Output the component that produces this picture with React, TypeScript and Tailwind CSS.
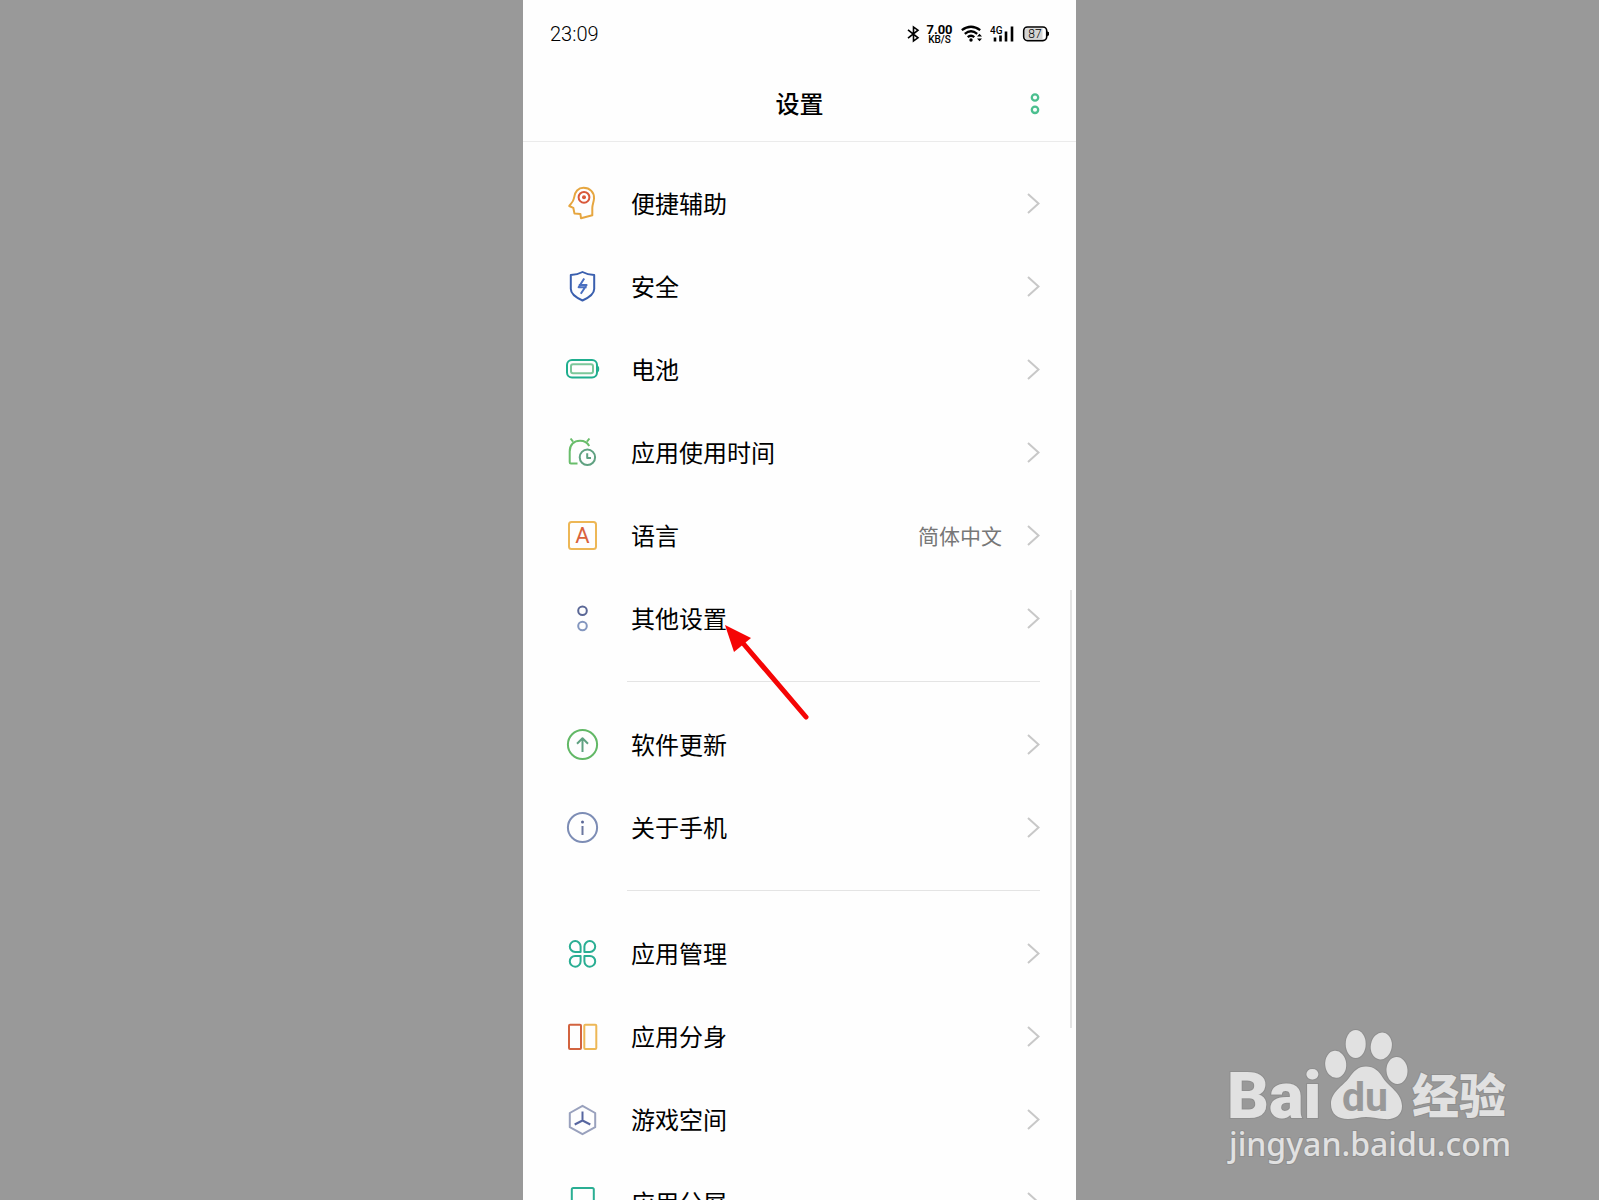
import type { ReactNode } from 'react'

type Setting = {
    label: string
    value?: string
    icon: ReactNode
    pointed?: boolean
}

const groups: Setting[][] = [
    [
        {
            label: '便捷辅助',
            icon: (
                <>
                    <path
                        stroke="#e6a640"
                        d="M12 15C12.5 8.5 16.5 4.8 21.5 4.8C28 4.8 32.4 9.5 32 15.5C31.8 19 30.3 22 30.3 25V32.3L19 35.2L18.4 31L12.5 30.6L11.3 24.8L7.2 23C9 20.5 11.6 18.5 12 15Z"
                    />
                    <circle cx="22" cy="14.3" r="5.4" stroke="#d9583a" />
                    <circle cx="22" cy="14.3" r="2" fill="#d9583a" stroke="none" />
                </>
            ),
        },
        {
            label: '安全',
            icon: (
                <>
                    <path
                        stroke="#3a5fae"
                        d="M20.5 6C17 8 13 8.8 8.8 9V23C8.8 28.5 15 32 20.5 34.5C26 32 32.2 28.5 32.2 23V9C28 8.8 24 8 20.5 6Z"
                    />
                    <path stroke="#4a6fc0" d="M22.2 12.5L16.6 21.2H24.6M18.8 27.8L24.6 19H16.8" />
                </>
            ),
        },
        {
            label: '电池',
            icon: (
                <>
                    <rect x="5" y="11" width="30" height="17.6" rx="5" stroke="#1fae8e" />
                    <rect x="9" y="15.3" width="22" height="9" rx="2" stroke="#7cc79b" />
                    <path d="M35 16.5C36.5 17 37.2 17.5 37.2 20S36.5 23 35 23.5Z" fill="#1fae8e" stroke="none" />
                </>
            ),
        },
        {
            label: '应用使用时间',
            icon: (
                <>
                    <path
                        stroke="#69bd6b"
                        d="M8.6 6.5L11 9.6M27.4 6.5L25 9.6M15.5 31.6H9Q7.7 31.6 7.7 30.3V19.5C7.7 12.5 12 8.7 18 8.7C22.5 8.7 25.5 10.5 27.2 14"
                    />
                    <circle cx="25.4" cy="25.3" r="7.7" stroke="#5fa181" />
                    <path stroke="#5fa181" d="M25.2 21.2V26H29" />
                </>
            ),
        },
        {
            label: '语言',
            value: '简体中文',
            icon: (
                <>
                    <rect x="7" y="7" width="27" height="27" rx="2.5" stroke="#edb756" />
                    <text
                        x="20.5"
                        y="28"
                        textAnchor="middle"
                        fill="#d9623c"
                        stroke="none"
                        className="font-['Roboto','Noto_Sans',sans-serif] text-[22px]"
                    >
                        A
                    </text>
                </>
            ),
        },
        {
            label: '其他设置',
            pointed: true,
            icon: (
                <>
                    <circle cx="20.5" cy="12.7" r="4.3" stroke="#5a6796" />
                    <circle cx="20.5" cy="28" r="4.3" stroke="#8497bf" />
                </>
            ),
        },
    ],
    [
        {
            label: '软件更新',
            icon: (
                <>
                    <circle cx="20.5" cy="20.5" r="14.6" stroke="#62b866" />
                    <path stroke="#5fa181" d="M20.5 28V14.2M15 19.8L20.5 14.2L26 19.8" />
                </>
            ),
        },
        {
            label: '关于手机',
            icon: (
                <>
                    <circle cx="20.5" cy="20.5" r="14.6" stroke="#7d8db5" />
                    <circle cx="20.5" cy="15" r="1.5" fill="#5a6796" stroke="none" />
                    <path stroke="#6b779f" d="M20.5 19V28" />
                </>
            ),
        },
    ],
    [
        {
            label: '应用管理',
            icon: (
                <g stroke="#2aae93">
                    <path d="M18.6 18.9H13.1A5.4 5.4 0 1 1 18.6 13.5Z" />
                    <path d="M22.4 18.9H27.9A5.4 5.4 0 1 0 22.4 13.5Z" />
                    <path d="M18.6 22.9H13.1A5.4 5.4 0 1 0 18.6 28.3Z" />
                    <path d="M22.4 22.9H27.9A5.4 5.4 0 1 1 22.4 28.3Z" />
                </g>
            ),
        },
        {
            label: '应用分身',
            icon: (
                <>
                    <rect x="7" y="8.7" width="12" height="24.3" rx="1" stroke="#d2633f" />
                    <rect x="22.3" y="8.7" width="12" height="24.3" rx="1" stroke="#edb756" />
                </>
            ),
        },
        {
            label: '游戏空间',
            icon: (
                <>
                    <path stroke="#99a1bd" d="M20.5 6.8L33.2 14V28.2L20.5 35.2L7.8 28.2V14Z" />
                    <path stroke="#5766a0" d="M20.5 12.5V21.5L12.7 25.5M20.5 21.5L28.3 25.5" />
                </>
            ),
        },
        {
            label: '应用分屏',
            icon: (
                <>
                    <rect x="9.8" y="6" width="22" height="29" rx="1.5" stroke="#2aae93" />
                    <path stroke="#7cc79b" d="M10 20.5H31" />
                </>
            ),
        },
    ],
]

const StatusBar: React.FC = () => (
    <div className="flex h-[66px] items-center justify-between pt-0.5 pr-[26px] pl-[27px] font-['Roboto','Noto_Sans',sans-serif] text-black">
        <span className="text-[20px] leading-6 font-light">23:09</span>
        <div className="flex items-center">
            <svg width="14" height="18" viewBox="0 0 14 18" fill="none" stroke="#000" strokeWidth="1.6">
                <path d="M2 4.8L12 12.8L7.5 16V2L12 5.2L2 13.2" />
            </svg>
            <div className="ml-1.5 flex w-[27px] flex-col items-center pt-0.5">
                <span className="text-[13px] leading-[10px] font-bold">7.00</span>
                <span className="text-[10px] leading-[10px] font-medium">KB/S</span>
            </div>
            <svg className="ml-2" width="22" height="18" viewBox="0 0 22 18" fill="none" stroke="#000" strokeWidth="2.3">
                <path d="M.8 5.2Q10 -1.8 19.2 5.2M3.8 8.8Q10 3.8 16.2 8.8M6.7 12.2Q10 9.2 13.3 12.2" />
                <circle cx="10" cy="15" r="1.7" fill="#000" stroke="none" />
                <path d="M16 11.5L18.5 8.8L21 11.5ZM16 13.5L18.5 16.2L21 13.5Z" fill="#000" stroke="none" />
            </svg>
            <svg className="ml-[7px]" width="24" height="18" viewBox="0 0 24 18">
                <text x="0" y="9" className="text-[10px] font-medium">
                    4G
                </text>
                <path d="M5 16.5V12.5M10.5 16.5V10.5M16 16.5V6.5M22 16.5V1.5" stroke="#000" strokeWidth="2.6" />
            </svg>
            <svg className="ml-2" width="28" height="18" viewBox="0 0 28 18">
                <rect x="1.7" y="2" width="23" height="13.6" rx="3.8" fill="#fff" stroke="#000" strokeWidth="1.6" />
                <path d="M4.5 3.2H20.5V14.4H4.5Q3 14.4 3 12.8V4.8Q3 3.2 4.5 3.2Z" fill="#d4d4d4" />
                <path d="M25 6.3L27 7.3V10.3L25 11.3Z" />
                <text x="13" y="13" textAnchor="middle" className="text-[12px] font-light">
                    87
                </text>
            </svg>
        </div>
    </div>
)

const Pointer: React.FC = () => (
    <svg className="pointer-events-none absolute top-full left-full z-10 -mt-3 -ml-[3px]" width="88" height="100" viewBox="0 0 88 100">
        <path d="M18 18L82 93" stroke="#f50505" strokeWidth="5" strokeLinecap="round" />
        <path d="M1 1L27 14L10 28Z" fill="#f50505" />
    </svg>
)

const Row: React.FC<{ item: Setting }> = ({ item }) => (
    <li>
        <button type="button" className="flex h-[83px] w-full items-center pr-9 pl-[39px] text-left">
            <svg className="shrink-0" width="41" height="41" viewBox="0 0 41 41" fill="none" strokeWidth="2" strokeLinejoin="round">
                {item.icon}
            </svg>
            <span className="relative ml-7 pb-0.5 text-[24px] leading-8 text-black">
                {item.label}
                {item.pointed && <Pointer />}
            </span>
            {item.value && <span className="ml-auto pb-0.5 text-[21px] leading-8 text-[#777]">{item.value}</span>}
            <svg
                className={item.value ? 'ml-6 shrink-0' : 'ml-auto shrink-0'}
                width="14"
                height="22"
                viewBox="0 0 14 22"
                fill="none"
                stroke="#c8c8c8"
                strokeWidth="2"
            >
                <path d="M2 1L12.5 10.5L2 20" />
            </svg>
        </button>
    </li>
)

const Watermark: React.FC = () => (
    <svg
        className="pointer-events-none absolute right-[79px] bottom-[30px]"
        width="300"
        height="150"
        viewBox="0 0 300 150"
        fill="#e1e1e1"
        stroke="#8e8e8e"
        strokeWidth="2"
        paintOrder="stroke"
    >
        <text x="7" y="98" className="font-['Roboto','Noto_Sans',sans-serif] text-[65px] font-black">
            Bai
        </text>
        <ellipse cx="115.7" cy="44.3" rx="10.5" ry="13.5" transform="rotate(-5 115.7 44.3)" />
        <ellipse cx="135.7" cy="24" rx="10" ry="14" />
        <ellipse cx="161.3" cy="26" rx="10.5" ry="13.5" transform="rotate(10 161.3 26)" />
        <ellipse cx="177" cy="50.5" rx="10.5" ry="13.5" transform="rotate(-4 177 50.5)" />
        <path d="M146 46.5C154 46.5 159 51 163 58C168 66 182 73 182 86C182 96 174 100 164 99C157 98.5 152 97 146 97C140 97 135 99 128 99C118 99 111 94 111 84C111 72 123 66 129 58C134 51 138 46.5 146 46.5Z" />
        <text
            x="145"
            y="91"
            textAnchor="middle"
            fill="#999"
            stroke="none"
            className="font-['Roboto','Noto_Sans',sans-serif] text-[41px] font-bold"
        >
            du
        </text>
        <text x="192" y="93" className="font-['Noto_Sans_CJK_SC',sans-serif] text-[47px] font-black">
            经验
        </text>
        <text x="9" y="136" className="font-['Noto_Sans',sans-serif] text-[32px] font-medium">
            jingyan.baidu.com
        </text>
    </svg>
)

const App: React.FC = () => {
    return (
        <div className="relative h-screen overflow-hidden bg-[#999]">
            <main className="relative mx-auto h-full w-full max-w-[553px] overflow-hidden bg-[#fefefe] font-['Noto_Sans_CJK_SC',sans-serif]">
                <StatusBar />
                <header className="grid h-[76px] grid-cols-[1fr_auto_1fr] items-center border-b border-[#ebebeb] px-[31px]">
                    <h1 className="col-start-2 pb-0.5 text-[24px] leading-8 font-medium text-black">设置</h1>
                    <button type="button" aria-label="更多" className="justify-self-end">
                        <svg width="20" height="24" viewBox="0 0 20 24" fill="none" stroke="#4bbf8f" strokeWidth="2.3">
                            <circle cx="10" cy="5.5" r="3.2" />
                            <circle cx="10" cy="17.8" r="3.2" />
                        </svg>
                    </button>
                </header>
                <div className="pt-5">
                    {groups.map((items, index) => (
                        <section key={items[0].label}>
                            {index > 0 && <hr className="my-[21px] mr-9 ml-[104px] border-[#e4e4e4]" />}
                            <ul>
                                {items.map((item) => (
                                    <Row key={item.label} item={item} />
                                ))}
                            </ul>
                        </section>
                    ))}
                </div>
                <div className="absolute top-[590px] right-1 h-[438px] w-0.5 bg-[#e4e4e4]" />
            </main>
            <Watermark />
        </div>
    )
}

export default App
